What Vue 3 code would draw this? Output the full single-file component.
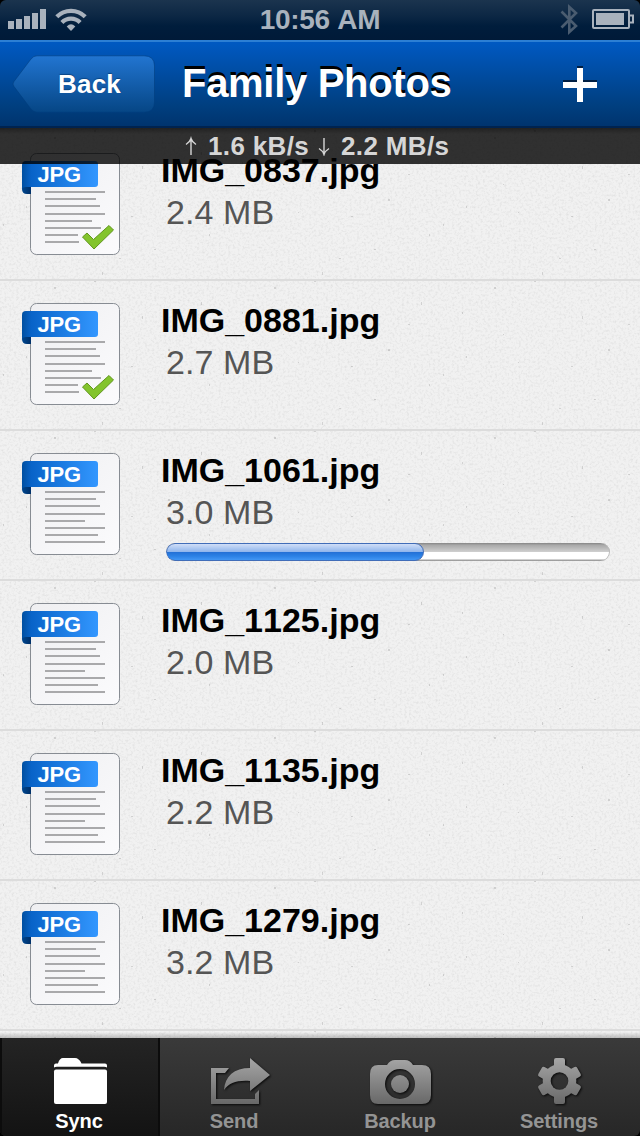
<script setup>
const files = [
  { name: 'IMG_0837.jpg', size: '2.4 MB', done: true },
  { name: 'IMG_0881.jpg', size: '2.7 MB', done: true },
  { name: 'IMG_1061.jpg', size: '3.0 MB', progress: 58.1 },
  { name: 'IMG_1125.jpg', size: '2.0 MB' },
  { name: 'IMG_1135.jpg', size: '2.2 MB' },
  { name: 'IMG_1279.jpg', size: '3.2 MB' },
]
const fullLines = [60, 51, 55, 60, 40, 60, 53, 60]
const doneLines = [60, 51, 55, 60, 47, 56, 33, 34]
const lineTops = [38, 45, 52, 60, 67, 74, 81, 88]
const linesOf = (f) => (f.done ? doneLines : fullLines)
</script>

<template>
  <div class="screen">
    <header class="status">
      <svg class="signal" width="90" height="40" viewBox="0 0 90 40" fill="#a9b2bd">
        <path d="M8 21h6v8H8zM16 19h6v10h-6zM24 16h6v13h-6zM32 13h6v16h-6zM40 9h6v20h-6z" />
        <g fill="none" stroke="#a9b2bd" stroke-width="4.2">
          <path d="M56.8 16.8A20 20 0 0 1 85.2 16.8" />
          <path d="M61.9 22.5A12.6 12.6 0 0 1 80.1 22.5" />
        </g>
        <path d="M71 31l-4.3-4.5q4.3-4.6 8.6 0z" />
      </svg>
      <span class="time">10:56 AM</span>
      <svg class="power" width="90" height="40" viewBox="550 0 90 40">
        <path d="M561.5 11.5L576 26L569.300 32V7L576 13L561.500 27.500" fill="none" stroke="#4a5c70" stroke-width="2.6" />
        <rect x="593" y="10" width="36" height="18" rx="1" fill="none" stroke="#a9b2bd" stroke-width="2" />
        <path d="M596 13h28v12h-28z" fill="#a9b2bd" />
        <path d="M630 15.500h3v7h-3" fill="none" stroke="#a9b2bd" stroke-width="2" />
      </svg>
    </header>

    <nav class="navbar">
      <div class="back">
        <svg class="back-shape" width="144" height="60" viewBox="0 0 144 60">
          <defs>
            <linearGradient id="backFill" x2="0" y2="1">
              <stop offset="0" stop-color="#2275d1" />
              <stop offset="1" stop-color="#064685" />
            </linearGradient>
          </defs>
          <path d="M25 .8H132Q142.500 .8 142.500 11V47Q142.500 57.200 132 57.200H25Q21.500 57.200 19 54L2 31.500Q0 29 2 26.500L19 4Q21.500 .8 25 .8Z" fill="url(#backFill)" stroke="#003c7c" stroke-opacity=".55" />
        </svg>
        <span class="back-label">Back</span>
      </div>
      <h1 class="title">Family Photos</h1>
      <svg class="add" width="40" height="42" viewBox="0 0 40 42">
        <path d="M17 2h6v14h14v6H3v-6h14z" fill="#001f44" />
        <path d="M17 4h6v14h14v6H23v14h-6V24H3v-6h14z" fill="#fff" />
      </svg>
    </nav>

    <main class="content">
      <svg class="paper" width="640" height="910">
        <defs>
          <filter id="grain" x="0" y="0" width="100%" height="100%" color-interpolation-filters="sRGB">
            <feTurbulence type="fractalNoise" baseFrequency=".42" numOctaves="3" seed="8" />
            <feColorMatrix values="0 0 0 0 .5  0 0 0 0 .5  0 0 0 0 .5  .3 0 0 0 -.135" />
          </filter>
          <pattern id="specks" width="220" height="150" patternUnits="userSpaceOnUse">
            <path fill="#777" fill-opacity=".26" d="M94 2h2v2h-2zM54 9h2v2h-2zM22 34h1v2h-1zM142 38h1v3h-1zM168 71h2v2h-2zM201 24h1v3h-1zM188 46h2v1h-2zM102 144h1v3h-1zM78 84h1v1h-1zM26 78h1v2h-1zM119 130h2v1h-2zM209 106h1v2h-1zM3 96h1v2h-1zM154 121h2v1h-2zM63 56h1v1h-1zM131 88h2v1h-2z" />
          </pattern>
        </defs>
        <rect width="640" height="910" filter="url(#grain)" />
        <rect width="640" height="910" fill="url(#specks)" />
      </svg>
      <ul class="list">
        <li v-for="f in files" :key="f.name" class="row">
          <svg class="file-icon" width="100" height="106" viewBox="0 0 100 106">
            <defs>
              <linearGradient id="ribbon"><stop offset="0" stop-color="#004fa0" /><stop offset=".12" stop-color="#0863c8" /><stop offset="1" stop-color="#3397ff" /></linearGradient>
              <linearGradient id="fold"><stop offset="0" stop-color="#00478f" /><stop offset="1" stop-color="#002f68" /></linearGradient>
              <linearGradient id="sheet" x2="1" y2="1"><stop offset="0" stop-color="#efeff1" /><stop offset="1" stop-color="#fbfbfd" /></linearGradient>
            </defs>
            <rect x="8.500" y=".5" width="89" height="101" rx="6" fill="url(#sheet)" stroke="#878c93" />
            <path d="M0 28h9v13H5q-5 0-5-5z" fill="url(#fold)" />
            <path d="M4 8H73q3 0 3 3V31q0 3-3 3H4Q0 34 0 37V12Q0 8 4 8Z" fill="url(#ribbon)" />
            <text x="15.500" y="28.700" textLength="43.500" font-size="22" font-weight="700" fill="#fff">JPG</text>
            <rect v-for="(w, i) in linesOf(f)" :key="i" x="23" :y="lineTops[i]" :width="w" height="2" fill="#a9a9ab" />
            <path v-if="f.done" d="M60.500 77L65 73L71.500 79.500L87 65.500L91.500 70L72 89Z" transform="translate(0 7)" fill="#83c42d" stroke="#61961f" stroke-linejoin="round" />
          </svg>
          <div class="info">
            <div class="name">{{ f.name }}</div>
            <div class="size">{{ f.size }}</div>
            <div v-if="f.progress" class="track">
              <div class="fill" :style="{ width: f.progress + '%' }"></div>
            </div>
          </div>
        </li>
      </ul>
      <div class="speed">
        <svg width="12" height="20" viewBox="0 0 12 20" fill="none" stroke="#d6d6d6" stroke-width="1.400"><path d="M6 19V3M1 8.500Q5 6 6 2.500Q7 6 11 8.500" /></svg>
        <span class="rate up">1.6 kB/s</span>
        <svg width="12" height="20" viewBox="0 0 12 20" fill="none" stroke="#d6d6d6" stroke-width="1.400"><path d="M6 2V18M1 12.500Q5 15 6 18.500Q7 15 11 12.500" /></svg>
        <span class="rate">2.2 MB/s</span>
      </div>
    </main>

    <footer class="tabs">
      <div class="tab active">
        <svg class="glyph" width="64" height="52" viewBox="0 0 64 52">
          <path d="M6 11.500V9.500q0-2 2-2h2q1.500-5.500 5-5.500H27q4 0 6.500 5.500H57q2 0 2 2v2q-1-.8-3-.8H9q-2 0-3 .8z" fill="#fff" />
          <rect x="6" y="13.500" width="53" height="34.500" rx="2" fill="#fff" />
        </svg>
        <span class="label">Sync</span>
      </div>
      <div class="tab">
        <svg class="glyph" width="64" height="52" viewBox="0 0 64 52">
          <defs>
            <linearGradient id="metal" gradientUnits="userSpaceOnUse" x1="0" y1="2" x2="0" y2="48"><stop offset="0" stop-color="#a6a6a6" /><stop offset="1" stop-color="#686868" /></linearGradient>
          </defs>
          <g class="raised" fill="url(#metal)">
            <path d="M3 12H21L17 17H8V43H47V38L51 34V48H3Z" />
            <path d="M16 34C17 20 26 12 42 12V2L62 19L42 35V25C29 24 21 27 16 34Z" />
          </g>
        </svg>
        <span class="label send">Send</span>
      </div>
      <div class="tab">
        <svg class="glyph" width="64" height="52" viewBox="0 0 64 52">
          <g class="raised" fill="url(#metal)">
            <path fill-rule="evenodd" d="M10 9H19Q22 4 27 4H37Q42 4 45 9H54Q63 9 63 18V39Q63 48 54 48H10Q2 48 2 39V18Q2 9 10 9ZM32 13A15 15 0 1 0 32 43A15 15 0 1 0 32 13Z" />
            <circle cx="32" cy="28" r="9" />
          </g>
        </svg>
        <span class="label">Backup</span>
      </div>
      <div class="tab">
        <svg class="glyph" width="64" height="52" viewBox="0 0 64 52">
          <defs>
            <mask id="hub"><rect width="64" height="52" fill="#fff" /><circle cx="31.500" cy="25" r="8.800" fill="#000" /></mask>
          </defs>
          <g class="raised">
            <g fill="url(#metal)" mask="url(#hub)">
              <circle cx="31.500" cy="25" r="16.800" />
              <path d="M26 11V4Q26 2 28 2H35Q37 2 37 4V11ZM26 39V46Q26 48 28 48H35Q37 48 37 46V39Z" />
              <path d="M17 24L11 20.500Q9.500 19.500 10.300 18L13.700 12Q14.700 10 16.500 11L23 14.500ZM46 24L52 20.500Q53.500 19.500 52.700 18L49.300 12Q48.300 10 46.500 11L40 14.500ZM17 26L11 29.500Q9.500 30.500 10.300 32L13.700 38Q14.700 40 16.500 39L23 35.500ZM46 26L52 29.500Q53.500 30.500 52.700 32L49.300 38Q48.300 40 46.500 39L40 35.500Z" />
            </g>
          </g>
        </svg>
        <span class="label settings">Settings</span>
      </div>
    </footer>
  </div>
</template>

<style>
body { background: #000; }
</style>

<style scoped>
.screen {
  width: 640px;
  height: 1136px;
  display: flex;
  flex-direction: column;
  overflow: hidden;
  background: #000;
  font-family: "Liberation Sans", Arial, sans-serif;
  font-kerning: none;
}
.status {
  height: 40px;
  display: grid;
  grid-template-columns: 90px 1fr 90px;
  border-radius: 6px 6px 0 0;
  background: linear-gradient(#1b344e, #0c2744 40%, #001d3c 65%, #001a38);
}
.time {
  text-align: center;
  font-size: 28px;
  font-weight: 700;
  line-height: 39px;
  letter-spacing: -0.3px;
  color: #a9b2bd;
}
.navbar {
  height: 88px;
  box-sizing: border-box;
  display: flex;
  align-items: flex-start;
  padding-left: 12px;
  border-top: 2px solid #2c7fd4;
  border-bottom: 2px solid #002350;
  background: linear-gradient(#0059c2, #0055b8 12%, #003f80 75%, #00346e);
}
.back {
  display: grid;
  margin-top: 13px;
}
.back-shape, .back-label { grid-area: 1 / 1; }
.back-label {
  padding-left: 46px;
  font-size: 26px;
  font-weight: 700;
  line-height: 58px;
  letter-spacing: 0.2px;
  color: #fff;
  text-shadow: 0 -1px 1px #0a4585;
}
.title {
  margin: 18px 0 0 26px;
  width: 300px;
  font-size: 40px;
  font-weight: 700;
  line-height: 46px;
  letter-spacing: -0.3px;
  white-space: nowrap;
  color: #fff;
  text-shadow: 0 -3.5px 0 #000;
}
.add { margin: 22px 0 0 78px; }
.content {
  position: relative;
  height: 910px;
  overflow: hidden;
  background: #f1f1f1;
}
.paper { position: absolute; top: 0; left: 0; }
.content::after {
  content: "";
  position: absolute;
  left: 0;
  right: 0;
  bottom: 0;
  height: 6px;
  background: linear-gradient(transparent, rgba(0, 0, 0, .22));
}
.list {
  position: relative;
  margin: 0;
  padding: 3px 0 0;
  list-style: none;
}
.row {
  height: 150px;
  box-sizing: border-box;
  display: flex;
  align-items: flex-start;
  padding: 19px 30px 0 22px;
  border-bottom: 2px solid #dcdcdc;
}
.file-icon { margin-top: 3px; flex: none; }
.info { flex: 1; padding-left: 44px; }
.name {
  margin-left: -5px;
  font-size: 34px;
  font-weight: 700;
  line-height: 40px;
  color: #000;
}
.size {
  margin-top: 2px;
  font-size: 34px;
  line-height: 40px;
  letter-spacing: 0.1px;
  color: #555;
}
.track {
  height: 18px;
  margin-top: 11px;
  border-radius: 9px;
  overflow: hidden;
  background: linear-gradient(#858585, #a9a9a9 12%, #d0d0d0 50%, #fff 51%, #fff 86%, #c5c5c5 93%, #858585);
  box-shadow: inset -1px 0 0 #bbb;
}
.fill {
  height: 18px;
  box-sizing: border-box;
  border: 1px solid #416db8;
  border-radius: 9px;
  background: linear-gradient(#d0def7, #8fb5ec 49%, #236fd5 50%, #2b81e5 75%, #4297f4);
}
.speed {
  position: absolute;
  top: 0;
  left: 0;
  width: 640px;
  height: 36px;
  box-sizing: border-box;
  display: flex;
  align-items: center;
  padding-left: 185px;
  background: linear-gradient(rgba(0, 0, 0, .86), rgba(0, 0, 0, .8) 6px);
}
.rate {
  margin-left: 11px;
  font-size: 26px;
  font-weight: 700;
  line-height: 36px;
  letter-spacing: 0.35px;
  color: #d6d6d6;
}
.rate.up { width: 99px; margin-right: 11px; white-space: nowrap; }
.tabs {
  height: 98px;
  display: grid;
  grid-template-columns: repeat(4, 160px);
  border-radius: 0 0 6px 6px;
  overflow: hidden;
  background: linear-gradient(#3a3a3a, #272727);
}
.tab {
  display: flex;
  flex-direction: column;
  align-items: center;
  padding-top: 18px;
}
.active {
  background: linear-gradient(#242424, #131313);
  box-shadow: inset 2px 0 0 #0c0c0c, inset -2px 0 0 #0c0c0c;
}
.glyph { flex: none; overflow: visible; }
.raised { filter: drop-shadow(1px 1px 1px #080808); }
.label {
  font-size: 20px;
  font-weight: 700;
  line-height: 26px;
  letter-spacing: -0.1px;
  color: #949494;
}
.send { padding-right: 12px; }
.settings { padding-right: 2px; }
.active .label { padding-right: 2px; color: #fff; }
</style>
